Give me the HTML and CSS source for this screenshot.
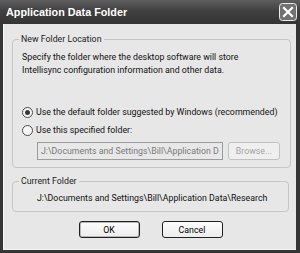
FILE: index.html
```html
<!DOCTYPE html>
<html lang="en">
<head>
  <meta charset="UTF-8">
  <title>Application Data Folder</title>
  <link rel="stylesheet" href="styles.css">
</head>
<body>
  <div class="window">
    <div class="titlebar">
      <span class="title">Application Data Folder</span>
      <span class="close">
        <svg width="18" height="18" viewBox="0 0 18 18">
          <rect x="0.5" y="0.5" width="17" height="17" rx="3" fill="#727272" stroke="#eeeeee"/>
          <path d="M5 5 L13 13 M13 5 L5 13" stroke="#ffffff" stroke-width="2.2" stroke-linecap="square"/>
        </svg>
      </span>
    </div>
    <div class="client">
      <fieldset class="group first">
        <legend>New Folder Location</legend>
        <p class="desc">Specify the folder where the desktop software will store<br>Intellisync configuration information and other data.</p>
        <label class="radio top"><span class="dot checked"></span>Use the default folder suggested by Windows (recommended)</label>
        <label class="radio"><span class="dot"></span>Use this specified folder:</label>
        <div class="pathrow">
          <div class="pathbox">J:\Documents and Settings\Bill\Application D</div>
          <button class="btn disabled">Browse...</button>
        </div>
      </fieldset>
      <fieldset class="group second">
        <legend>Current Folder</legend>
        <div class="current">J:\Documents and Settings\Bill\Application Data\Research</div>
      </fieldset>
      <div class="buttons">
        <button class="btn default">OK</button>
        <button class="btn">Cancel</button>
      </div>
    </div>
  </div>
</body>
</html>
```

FILE: styles.css
```css
body { margin: 0; font-family: Roboto, "Liberation Sans", sans-serif; font-size: 8.8px; color: #111; }

.window {
  width: 300px;
  height: 253px;
  background: #353535;
  display: flex;
  flex-direction: column;
}

.titlebar {
  height: 24px;
  flex: none;
  display: flex;
  align-items: center;
  justify-content: space-between;
  padding: 0 3px 0 6px;
  background: linear-gradient(#5e5e5e, #404040 45%, #343434);
  color: #fff;
}
.title { font-family: "Liberation Sans", sans-serif; font-weight: bold; font-size: 10.8px; }
.close { display: flex; }

.client {
  flex: 1;
  margin: 0 4px 3px 3px;
  background: #e7e7e7;
  border-left: 1px solid #f6f6f6;
  border-bottom: 1px solid #f6f6f6;
  padding: 9px 7px 0 8px;
  display: flex;
  flex-direction: column;
}

.group {
  margin: 0;
  border: 1px solid #c6c6c6;
  border-radius: 4px;
  padding: 0 10px 7px 9px;
}
.group legend {
  margin-left: -3px;
  padding: 0 2px;
  line-height: 12px;
  color: #222;
}
.second { margin-top: 7px; padding-bottom: 6px; }

.desc { margin: 6px 0 0; line-height: 13px; white-space: nowrap; }

.radio { display: flex; align-items: center; height: 14px; margin-top: 4px; white-space: nowrap; }
.radio.top { margin-top: 28px; }
.dot {
  width: 9px;
  height: 9px;
  border: 1px solid #4a4a4a;
  border-radius: 50%;
  background: #f6f6f6;
  margin-right: 3px;
  display: flex;
  align-items: center;
  justify-content: center;
}
.dot.checked::after {
  content: "";
  width: 5px;
  height: 5px;
  border-radius: 50%;
  background: #3a3a3a;
}

.pathrow { display: flex; gap: 5px; margin: 5px 0 0 15px; }
.pathbox {
  flex: 1;
  height: 18px;
  box-sizing: border-box;
  border: 1px solid #9c9c9c;
  background: #e8e8e8;
  color: #7a7a7a;
  padding: 0 3px;
  line-height: 16px;
  white-space: nowrap;
  overflow: hidden;
}

.btn {
  font-family: inherit;
  font-size: 8.8px;
  height: 17px;
  box-sizing: border-box;
  border: 1px solid #202020;
  border-radius: 3px;
  background: linear-gradient(#fdfdfd, #ececec);
  color: #000;
  padding: 0;
}
.btn.default { box-shadow: inset 0 0 0 1px #b8b8b8; }
.btn.disabled {
  width: 52px;
  height: 18px;
  border-color: #c2c2c2;
  background: #efefef;
  color: #a4a4a4;
}

.current { margin: 4px 0 0 15px; line-height: 14px; white-space: nowrap; }

.buttons { display: flex; justify-content: center; gap: 22px; margin-top: 9px; }
.buttons .btn { width: 61px; }
```
